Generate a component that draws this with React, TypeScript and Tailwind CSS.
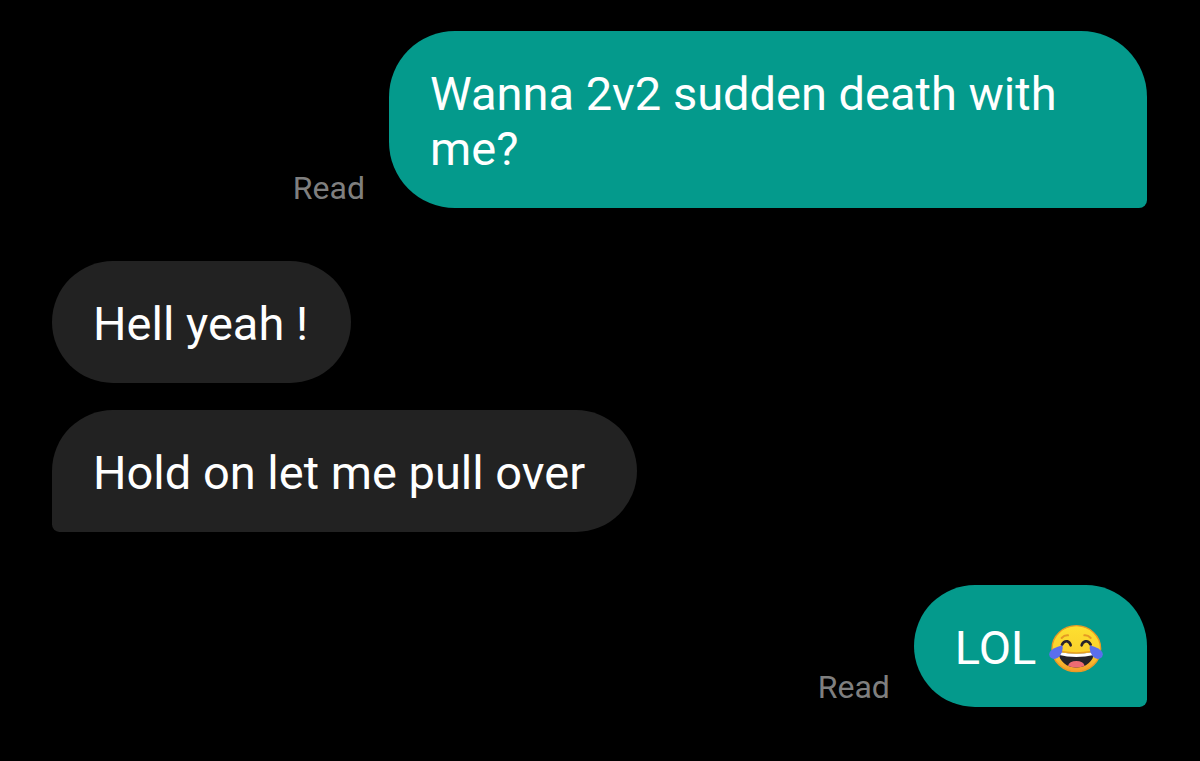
import clsx from "clsx";

type Message = {
  id: number;
  text: string;
  sent?: boolean;
  read?: boolean;
  joy?: boolean;
  // last message of a group gets the squared-off corner
  tail?: boolean;
  className: string;
};

const messages: Message[] = [
  { id: 1, text: "Wanna 2v2 sudden death with me?", sent: true, read: true, tail: true, className: "" },
  { id: 2, text: "Hell yeah !", className: "mt-[53px]" },
  { id: 3, text: "Hold on let me pull over", tail: true, className: "mt-[27px]" },
  { id: 4, text: "LOL", sent: true, read: true, joy: true, tail: true, className: "mt-[53px]" },
];

function JoyEmoji() {
  return (
    <svg
      viewBox="0 0 168 150"
      role="img"
      aria-label="Face with tears of joy"
      className="inline-block w-14 h-[50px] -mt-[11px] -mb-[5px] align-middle"
    >
      <defs>
        <linearGradient id="joy-face" x1="0" y1="0" x2="0" y2="1">
          <stop offset="0" stopColor="#fde030" />
          <stop offset="0.6" stopColor="#fbd02c" />
          <stop offset="1" stopColor="#f59b2c" />
        </linearGradient>
        <clipPath id="joy-mouth">
          <path d="M32 84Q84 94 138 84C138 112 112 131 85 131S32 112 32 84Z" />
        </clipPath>
      </defs>
      <ellipse cx="85" cy="74" rx="73" ry="69" fill="url(#joy-face)" stroke="#eb9a24" strokeWidth="4" />

      {/* Eyebrows */}
      <path d="M41 42Q49 33 60 34M109 34Q120 33 128 42" fill="none" stroke="#e59a25" strokeWidth="6" strokeLinecap="round" />

      {/* Eyes */}
      <path d="M42 62Q48 50 58 52Q66 54 68 64M101 64Q103 54 112 52Q122 50 128 62" fill="none" stroke="#29242b" strokeWidth="8" strokeLinecap="round" />

      {/* Mouth */}
      <g clipPath="url(#joy-mouth)">
        <rect x="25" y="75" width="120" height="60" fill="#252329" />
        <path d="M25 75H145V91Q85 107 25 91Z" fill="#fff" />
        <ellipse cx="85" cy="124" rx="24" ry="13" fill="#ed6b73" />
      </g>
      <path d="M40 82Q85 91 130 82" fill="none" stroke="#e9a020" strokeWidth="4" />

      {/* Tears */}
      <path d="M43 64Q47 82 35 97Q24 109 11 103Q-1 95 6 83Q13 73 43 64Z" fill="#5b6eec" />
      <path d="M126 64Q122 82 134 97Q145 109 157 103Q169 95 162 83Q155 73 126 64Z" fill="#5b6eec" />
    </svg>
  );
}

function Bubble({ message }: { message: Message }) {
  const { text, sent, read, joy, tail, className } = message;

  return (
    <li className={clsx("flex items-end gap-6", sent ? "justify-end" : "justify-start", className)}>
      {read && <span className="shrink-0 pb-1 text-[32px] leading-8 text-[#7f7f7f]">Read</span>}
      <p
        className={clsx(
          "max-w-[758px] rounded-[66px] pt-[35px] pb-8 pl-[41px] text-[47px] leading-[55px] text-white",
          sent ? "bg-[#049a8c]" : "bg-[#222222]",
          tail && !sent ? "pr-[52px]" : "pr-[43px]",
          tail && (sent ? "rounded-br-lg" : "rounded-bl-lg")
        )}
      >
        {text}
        {joy && <> <JoyEmoji /></>}
      </p>
    </li>
  );
}

export default function App() {
  return (
    <main className="min-h-screen overflow-hidden bg-black pt-[31px] pr-[53px] pl-[52px] font-[Roboto,sans-serif]">
      <ul>
        {messages.map((message) => (
          <Bubble key={message.id} message={message} />
        ))}
      </ul>
    </main>
  );
}
